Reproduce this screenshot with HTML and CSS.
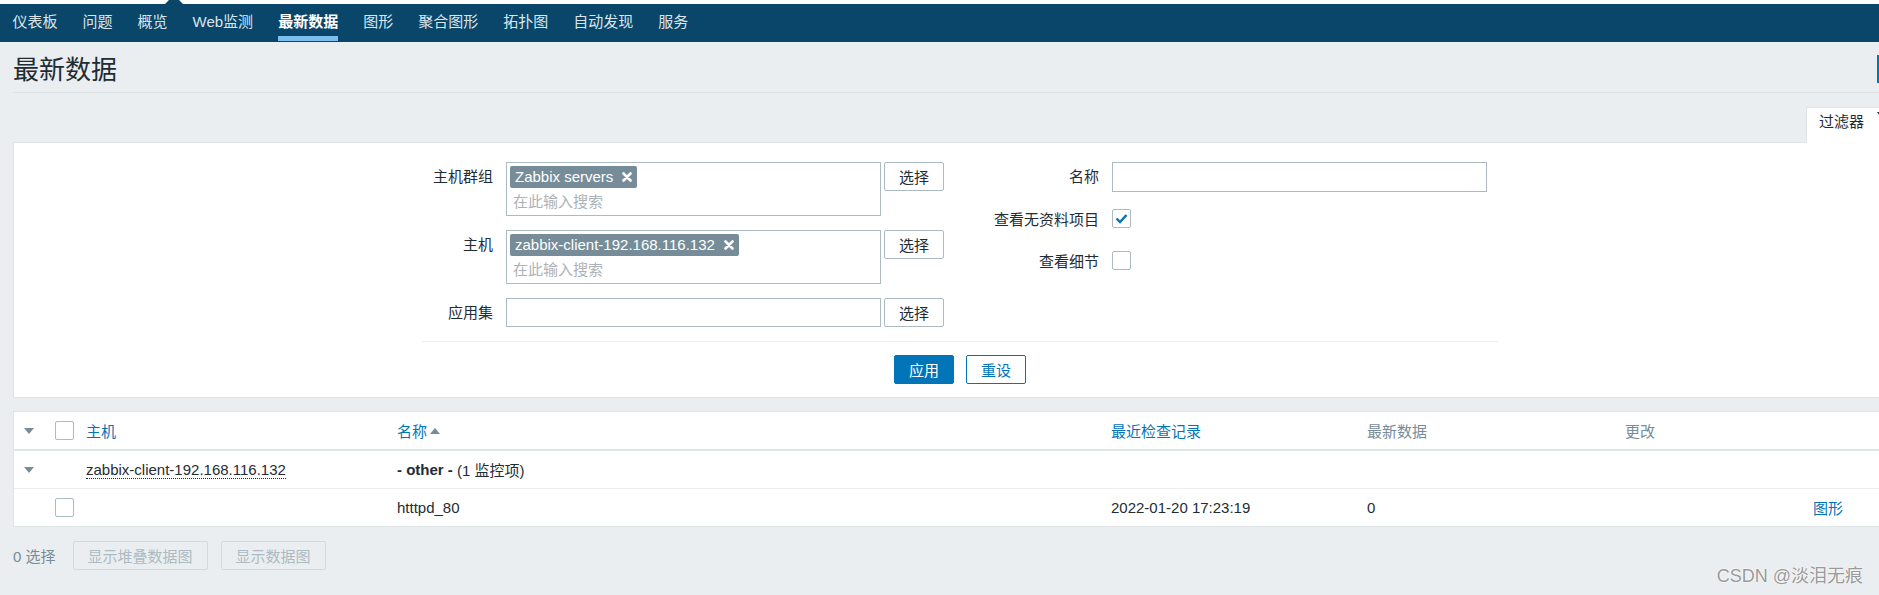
FILE: index.html
```html
<!DOCTYPE html>
<html lang="zh-CN">
<head>
<meta charset="utf-8">
<title>最新数据</title>
<link rel="stylesheet" href="styles.css">
</head>
<body>
<div class="topbar">
  <span class="notch"></span>
  <nav class="nav">
    <a class="nav-item">仪表板</a>
    <a class="nav-item">问题</a>
    <a class="nav-item">概览</a>
    <a class="nav-item">Web监测</a>
    <a class="nav-item active"><span>最新数据</span></a>
    <a class="nav-item">图形</a>
    <a class="nav-item">聚合图形</a>
    <a class="nav-item">拓扑图</a>
    <a class="nav-item">自动发现</a>
    <a class="nav-item">服务</a>
  </nav>
</div>

<main class="page">
  <header class="page-header">
    <h1>最新数据</h1>
    <span class="header-btn"></span>
  </header>

  <div class="filter-tabs">
    <div class="filter-tab">过滤器<svg class="tab-arrow" width="9" height="6" viewBox="0 0 9 6"><polygon points="0,0 9,0 4.5,6" fill="#1f2c33"/></svg></div>
  </div>

  <section class="filter-box">
    <div class="filter-form">
      <div class="filter-cols">
        <div class="col-left">
          <label class="f-label">主机群组</label>
          <div class="multiselect">
            <div class="chips"><span class="chip">Zabbix servers<svg class="chip-x" width="10" height="10" viewBox="0 0 10 10"><path d="M1.5 1.5 L8.5 8.5 M8.5 1.5 L1.5 8.5" stroke="#fff" stroke-width="2.6" stroke-linecap="round"/></svg></span></div>
            <div class="ms-input">在此输入搜索</div>
          </div>
          <button class="btn-grey">选择</button>

          <label class="f-label">主机</label>
          <div class="multiselect">
            <div class="chips"><span class="chip">zabbix-client-192.168.116.132<svg class="chip-x" width="10" height="10" viewBox="0 0 10 10"><path d="M1.5 1.5 L8.5 8.5 M8.5 1.5 L1.5 8.5" stroke="#fff" stroke-width="2.6" stroke-linecap="round"/></svg></span></div>
            <div class="ms-input">在此输入搜索</div>
          </div>
          <button class="btn-grey">选择</button>

          <label class="f-label">应用集</label>
          <div class="text-input"></div>
          <button class="btn-grey">选择</button>
        </div>

        <div class="col-right">
          <label class="f-label">名称</label>
          <div class="text-input"></div>

          <label class="f-label">查看无资料项目</label>
          <div class="check-cell"><span class="checkbox"><svg width="17" height="17" viewBox="0 0 17 17"><polyline points="3.5,8.5 7,12 13.5,5" fill="none" stroke="#0275b8" stroke-width="2.4"/></svg></span></div>

          <label class="f-label">查看细节</label>
          <div class="check-cell"><span class="checkbox"></span></div>
        </div>
      </div>
      <div class="filter-sep"></div>
      <div class="filter-buttons">
        <button class="btn-primary">应用</button>
        <button class="btn-alt">重设</button>
      </div>
    </div>
  </section>

  <section class="table-box">
    <div class="t-row t-head">
      <div class="c-tri"><svg width="10" height="6" viewBox="0 0 10 6"><polygon points="0,0 10,0 5,6" fill="#768d99"/></svg></div>
      <div class="c-chk"><span class="checkbox"></span></div>
      <div class="c-host"><a class="link">主机</a></div>
      <div class="c-name"><a class="link">名称</a><svg class="sort-arrow" width="10" height="6" viewBox="0 0 10 6"><polygon points="0,6 10,6 5,0" fill="#768d99"/></svg></div>
      <div class="c-check"><a class="link">最近检查记录</a></div>
      <div class="c-last muted">最新数据</div>
      <div class="c-change muted">更改</div>
      <div class="c-act"></div>
    </div>
    <div class="t-row t-group">
      <div class="c-tri"><svg width="10" height="6" viewBox="0 0 10 6"><polygon points="0,0 10,0 5,6" fill="#768d99"/></svg></div>
      <div class="c-chk"></div>
      <div class="c-host"><span class="host-link">zabbix-client-192.168.116.132</span></div>
      <div class="c-name"><b>- other -</b>&nbsp;(1 监控项)</div>
      <div class="c-check"></div>
      <div class="c-last"></div>
      <div class="c-change"></div>
      <div class="c-act"></div>
    </div>
    <div class="t-row t-item">
      <div class="c-tri"></div>
      <div class="c-chk"><span class="checkbox"></span></div>
      <div class="c-host"></div>
      <div class="c-name">htttpd_80</div>
      <div class="c-check">2022-01-20 17:23:19</div>
      <div class="c-last">0</div>
      <div class="c-change"></div>
      <div class="c-act"><a class="link">图形</a></div>
    </div>
  </section>

  <div class="footer">
    <span class="sel-count">0 选择</span>
    <button class="btn-disabled">显示堆叠数据图</button>
    <button class="btn-disabled">显示数据图</button>
  </div>
</main>

<div class="watermark">CSDN @淡泪无痕</div>
</body>
</html>
```

FILE: styles.css
```css
html, body {
  margin: 0;
  padding: 0;
  background: #ffffff;
  overflow: hidden;
}
body {
  width: 1879px;
  height: 595px;
  position: relative;
  font-family: "Liberation Sans", "Noto Sans CJK SC", sans-serif;
  font-size: 15px;
  color: #1f2c33;
}
button {
  font-family: inherit;
  font-size: 15px;
  box-sizing: border-box;
  cursor: pointer;
}

/* top navigation */
.topbar {
  position: relative;
  margin-top: 4px;
  height: 38px;
  background: #0a466a;
}
.notch {
  position: absolute;
  left: 165px;
  top: -4px;
  width: 18px;
  height: 4px;
  background: #0a466a;
  clip-path: polygon(22% 0, 78% 0, 100% 100%, 0 100%);
}
.nav {
  display: flex;
  height: 38px;
}
.nav-item {
  display: block;
  box-sizing: border-box;
  height: 38px;
  padding: 8px 12.5px 0;
  line-height: 20px;
  color: #dbe5ec;
  white-space: nowrap;
}
.nav-item.active {
  color: #ffffff;
  font-weight: bold;
}
.nav-item.active span {
  display: inline-block;
  padding-bottom: 4px;
  border-bottom: 5px solid #7bbef0;
}

/* page */
.page {
  background: #ebeef0;
  padding-left: 13px;
  height: 553px;
  overflow: hidden;
}
.page-header {
  display: flex;
  justify-content: space-between;
  align-items: flex-start;
  height: 50px;
  border-bottom: 1px solid #dfe4e7;
  box-sizing: content-box;
}
.page-header h1 {
  margin: 7px 0 0;
  font-size: 26px;
  line-height: 43px;
  font-weight: normal;
  color: #1f2c33;
}
.header-btn {
  width: 30px;
  height: 28px;
  margin-top: 13px;
  margin-right: -28px;
  background: #0275b8;
}

/* filter tab */
.filter-tabs {
  display: flex;
  justify-content: flex-end;
  margin-top: 14px;
}
.filter-tab {
  position: relative;
  z-index: 1;
  width: 100px;
  height: 36px;
  margin-right: -27px;
  margin-bottom: -1px;
  box-sizing: border-box;
  padding-left: 12px;
  background: #ffffff;
  border: 1px solid #dfe4e7;
  border-bottom: 0;
  line-height: 27px;
  color: #1f2c33;
  white-space: nowrap;
}
.tab-arrow {
  margin-left: 13px;
  vertical-align: 9px;
}

/* filter box */
.filter-box {
  background: #ffffff;
  border: 1px solid #dfe4e7;
  border-right: 0;
  padding: 19px 0 13px;
}
.filter-form {
  width: 1076px;
  margin-left: 408px;
}
.filter-cols {
  display: flex;
}
.col-left {
  width: 538px;
  display: grid;
  grid-template-columns: 71px 388px 63px;
  row-gap: 14px;
  align-items: start;
}
.col-left .multiselect,
.col-left .text-input {
  margin-left: 13px;
}
.col-left .btn-grey {
  margin-left: 3px;
}
.col-right {
  display: grid;
  grid-template-columns: 139px 375px;
  grid-template-rows: 31px 30px 30px;
  column-gap: 13px;
  row-gap: 12px;
  align-items: start;
}
.f-label {
  display: block;
  text-align: right;
  line-height: 30px;
  white-space: nowrap;
  color: #1f2c33;
}
.multiselect {
  box-sizing: border-box;
  height: 54px;
  border: 1px solid #acbbc2;
  background: #ffffff;
  padding: 3px 3px 0;
}
.chips {
  display: flex;
  height: 22px;
}
.chip {
  display: inline-flex;
  align-items: center;
  height: 22px;
  padding: 0 5px;
  background: #768d99;
  color: #ffffff;
  border-radius: 2px;
  white-space: nowrap;
  line-height: 22px;
}
.chip-x {
  margin-left: 9px;
}
.ms-input {
  margin-top: 3px;
  padding-left: 3px;
  line-height: 22px;
  color: #acb3b8;
}
.text-input {
  box-sizing: border-box;
  height: 29px;
  border: 1px solid #acbbc2;
  background: #ffffff;
}
.col-right .text-input {
  height: 30px;
}
.btn-grey {
  height: 29px;
  width: 60px;
  padding: 0;
  background: #ffffff;
  border: 1px solid #acbbc2;
  border-radius: 2px;
  color: #1f2c33;
}
.check-cell {
  padding-top: 4px;
}
.checkbox {
  display: block;
  box-sizing: border-box;
  width: 19px;
  height: 19px;
  border: 1px solid #acbbc2;
  border-radius: 2px;
  background: #ffffff;
}
.checkbox svg {
  display: block;
}
.filter-sep {
  margin-top: 13px;
  border-top: 1px solid #ebeef0;
}
.filter-buttons {
  display: flex;
  justify-content: center;
  gap: 12px;
  margin-top: 13px;
}
.btn-primary {
  width: 60px;
  height: 29px;
  padding: 0;
  border: 1px solid #0275b8;
  border-radius: 2px;
  background: #0275b8;
  color: #ffffff;
}
.btn-alt {
  width: 60px;
  height: 29px;
  padding: 0;
  border: 1px solid #0275b8;
  border-radius: 2px;
  background: #ffffff;
  color: #0275b8;
}

/* table */
.table-box {
  margin-top: 13px;
  background: #ffffff;
  border: 1px solid #dfe4e7;
  border-right: 0;
}
.t-row {
  display: grid;
  grid-template-columns: 41px 31px 311px 714px 256px 258px 175px 1fr;
  height: 37px;
  align-items: center;
  white-space: nowrap;
}
.t-head {
  border-bottom: 2px solid #dfe4e7;
}
.t-group {
  border-bottom: 1px solid #ebeef0;
}
.c-tri {
  padding-left: 10px;
  display: flex;
  align-items: center;
}
.c-tri svg {
  display: block;
}
.c-name {
  display: flex;
  align-items: center;
}
.c-act {
  text-align: right;
  padding-right: 36px;
}
.link {
  color: #0275b8;
  text-decoration: none;
}
.muted {
  color: #768d99;
}
.sort-arrow {
  margin-left: 3px;
}
.host-link {
  border-bottom: 1px dotted #1f2c33;
  line-height: 17px;
}

/* footer */
.footer {
  display: flex;
  align-items: center;
  margin-top: 14px;
}
.sel-count {
  color: #768d99;
  margin-right: 17px;
}
.btn-disabled {
  height: 29px;
  padding: 0 14px;
  margin-right: 13px;
  background: #ebeef0;
  border: 1px solid #d3d9dd;
  border-radius: 2px;
  color: #acbbc2;
}

.watermark {
  position: absolute;
  right: 16px;
  top: 565px;
  font-size: 18px;
  line-height: 22px;
  color: #9a9a9a;
  text-shadow: 0 0 2px #ffffff, 0 0 1px #ffffff;
  white-space: nowrap;
}
```
